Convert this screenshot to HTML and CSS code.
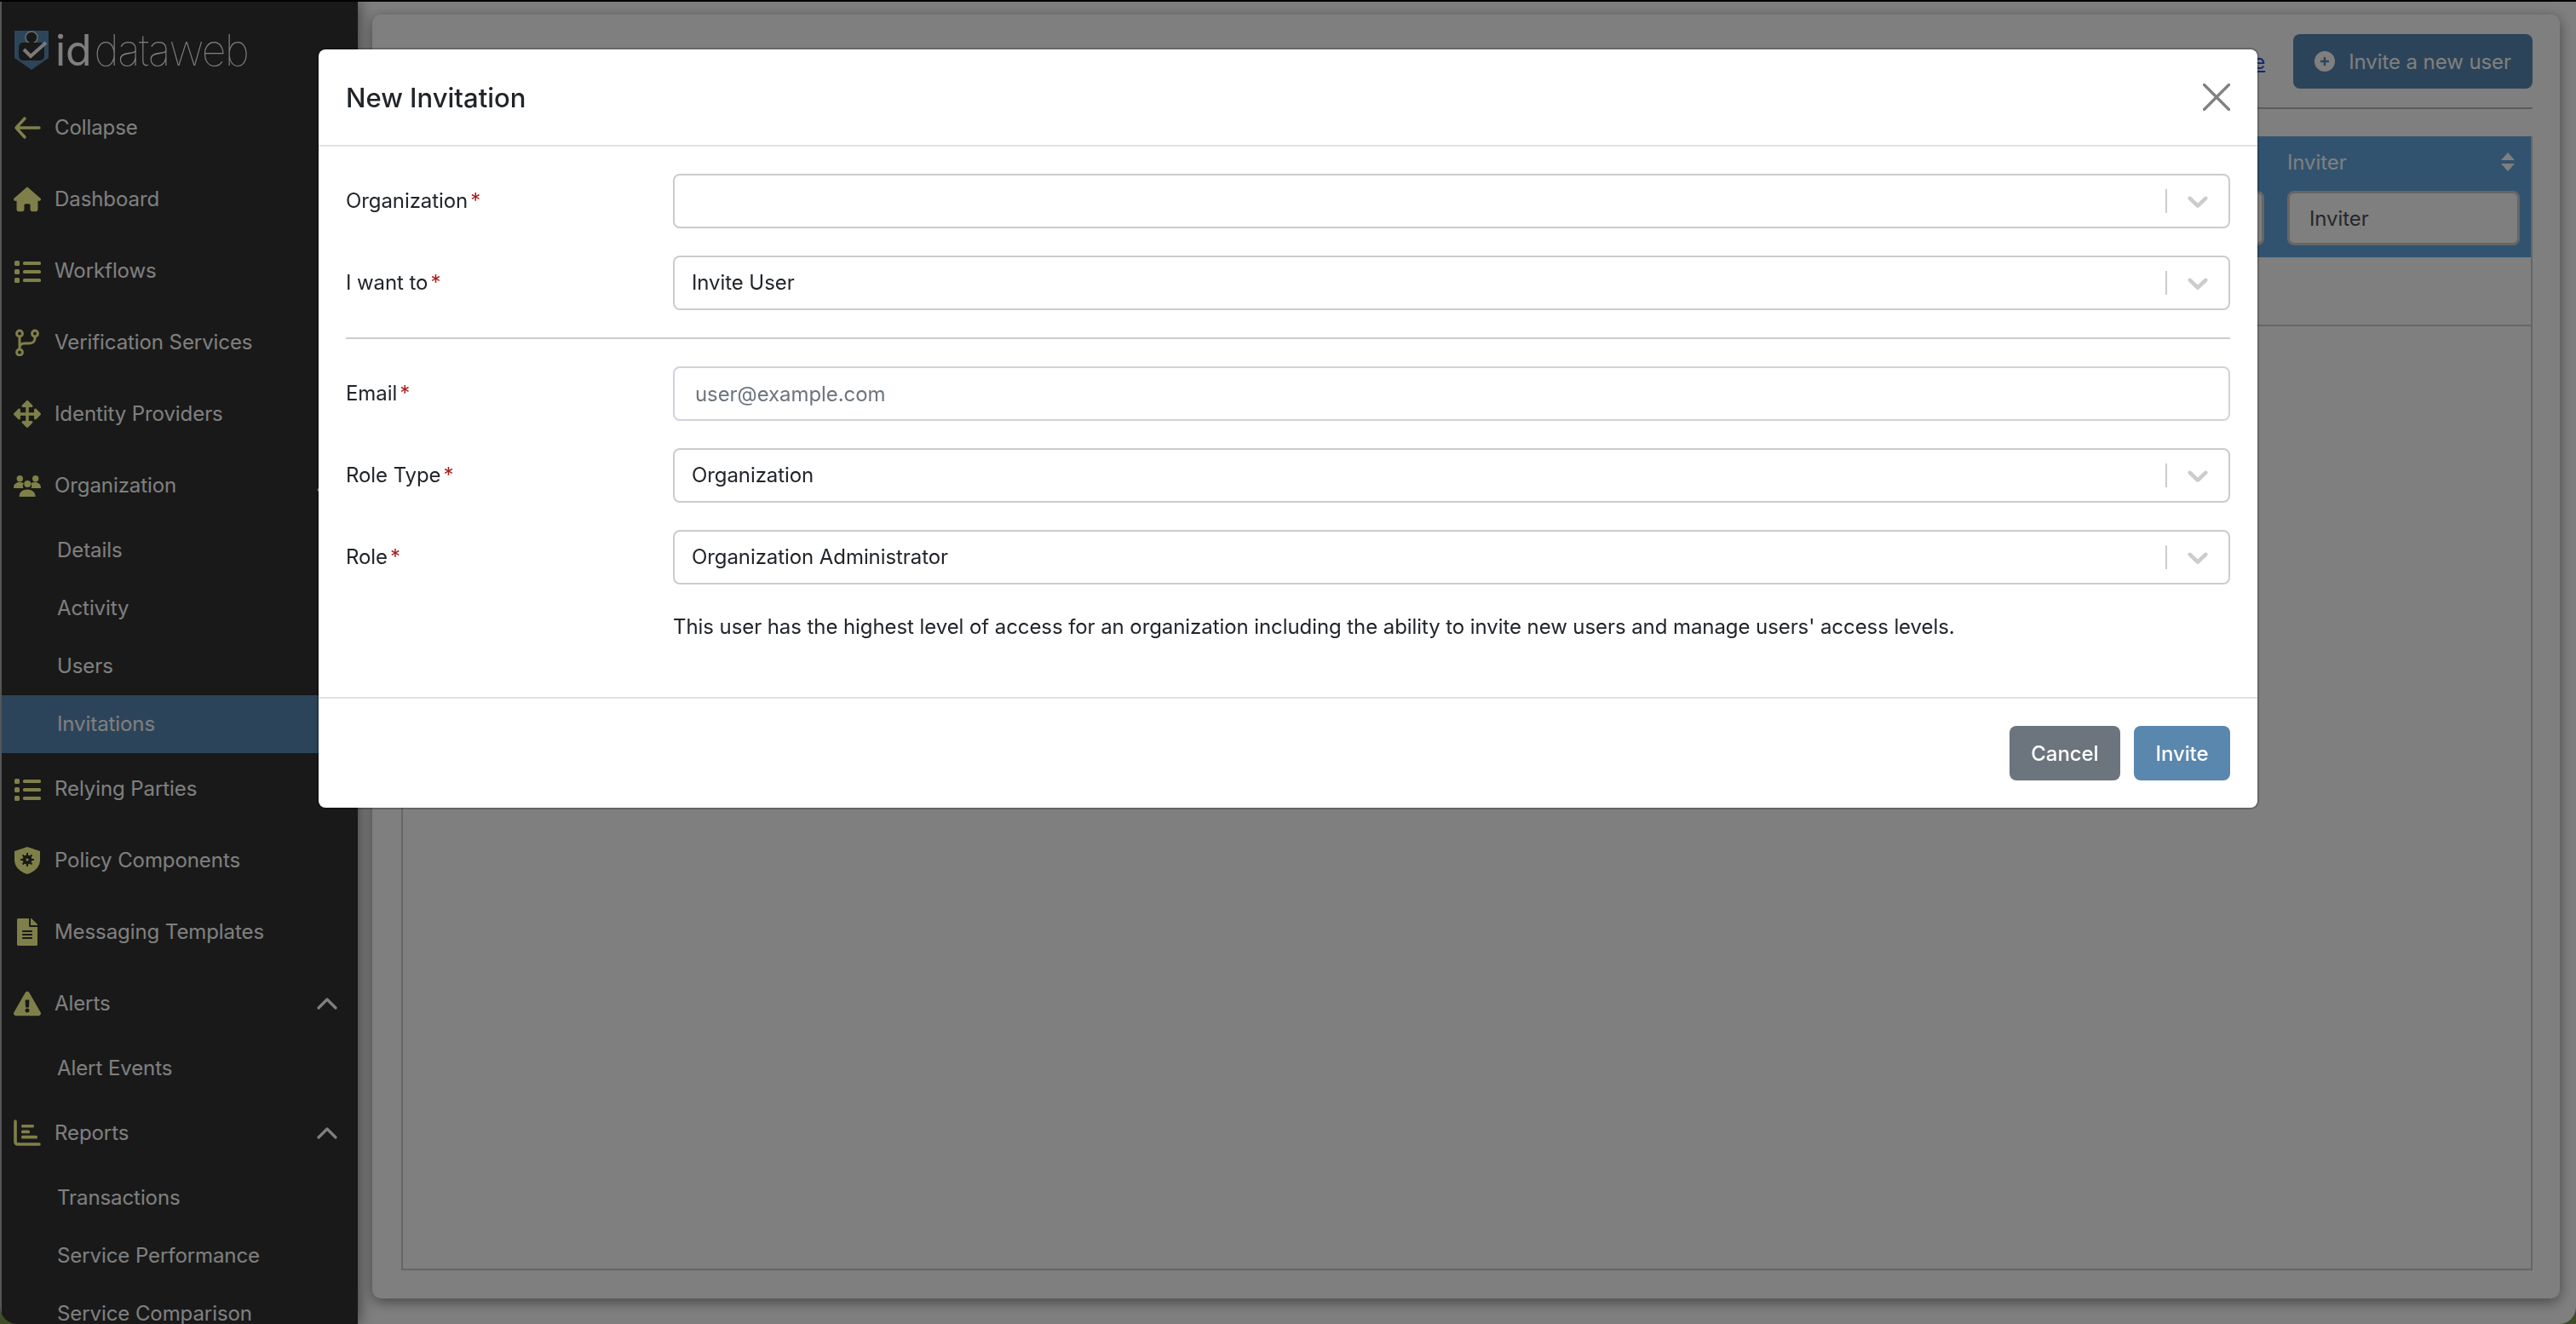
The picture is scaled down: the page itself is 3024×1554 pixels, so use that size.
FILE: index.html
```html
<!DOCTYPE html>
<html lang="en">
<head>
    <meta charset="UTF-8">
    <title>New Invitation</title>
    <link rel="stylesheet" href="styles.css">
</head>
<body>
    <div class="app">
        <!-- Left navigation -->
        <nav class="sidebar">
            <div class="logo">
                <svg class="logo-mark" width="42" height="48" viewBox="0 0 42 48">
                    <path d="M1 1H41V33L21 47L1 33Z" fill="#5a8ab4"/>
                    <circle cx="21" cy="9" r="7" fill="#333" stroke="#ddd" stroke-width="1.5"/>
                    <path d="M11 15H31A5 5 0 0 1 36 20V31A5 5 0 0 1 31 36H11A5 5 0 0 1 6 31V20A5 5 0 0 1 11 15Z" fill="#333"/>
                    <path d="M12 23L20 31L38 15" fill="none" stroke="#f4f4f4" stroke-width="4"/>
                </svg>
                <span class="logo-id">id</span><span class="logo-name">dataweb</span>
            </div>

            <a class="nav-item"><svg class="nav-icon" viewBox="0 0 32 32"><path d="M13 5L3 16L13 27M3 16H30" fill="none" stroke="currentColor" stroke-width="3.4" stroke-linecap="round" stroke-linejoin="round"/></svg>Collapse</a>
            <a class="nav-item"><svg class="nav-icon" viewBox="0 0 576 512"><path d="M575.8 255.5c0 18-15 32.1-32 32.1h-32l.7 160.2c0 2.7-.2 5.4-.5 8.1V472c0 22.1-17.9 40-40 40H456c-1.1 0-2.2 0-3.3-.1c-1.4 .1-2.8 .1-4.2 .1H416 392c-22.1 0-40-17.9-40-40V448 384c0-17.7-14.3-32-32-32H256c-17.7 0-32 14.3-32 32v64 24c0 22.1-17.9 40-40 40H160 128.1c-1.5 0-3-.1-4.5-.2c-1.2 .1-2.4 .2-3.6 .2H104c-22.1 0-40-17.9-40-40V360c0-.9 0-1.9 .1-2.8V287.6H32c-18 0-32-14-32-32.1c0-9 3-17 10-24L266.4 8c7-7 15-8 22-8s15 2 21 7L564.8 231.5c8 7 12 15 11 24z"/></svg>Dashboard</a>
            <a class="nav-item"><svg class="nav-icon" viewBox="0 0 32 32"><rect x="1" y="4" width="6" height="6" rx="1.5"/><rect x="1" y="14" width="6" height="6" rx="1.5"/><rect x="1" y="24" width="6" height="6" rx="1.5"/><rect x="11" y="5" width="21" height="4" rx="1.5"/><rect x="11" y="15" width="21" height="4" rx="1.5"/><rect x="11" y="25" width="21" height="4" rx="1.5"/></svg>Workflows</a>
            <a class="nav-item"><svg class="nav-icon" viewBox="0 0 32 32"><circle cx="7" cy="5.5" r="3.4" fill="none" stroke="currentColor" stroke-width="3"/><circle cx="25" cy="5.5" r="3.4" fill="none" stroke="currentColor" stroke-width="3"/><circle cx="7" cy="27.5" r="3.4" fill="none" stroke="currentColor" stroke-width="3"/><path d="M7 9V24M25 9V11C25 15 22 17 18 17H13C9 17 7 19 7 22" fill="none" stroke="currentColor" stroke-width="3"/></svg>Verification Services</a>
            <a class="nav-item"><svg class="nav-icon" viewBox="0 0 512 512"><path d="M352.201 425.775l-79.196 79.196c-9.373 9.373-24.568 9.373-33.941 0l-79.196-79.196c-15.119-15.119-4.411-40.971 16.971-40.97h51.162L228 284H127.196v51.162c0 21.382-25.851 32.09-40.971 16.971L7.029 272.937c-9.373-9.373-9.373-24.569 0-33.941L86.225 159.8c15.119-15.119 40.971-4.411 40.971 16.971V228H228V127.196h-51.23c-21.382 0-32.09-25.851-16.971-40.971l79.196-79.196c9.373-9.373 24.568-9.373 33.941 0l79.196 79.196c15.119 15.119 4.411 40.971-16.971 40.971h-51.162V228h100.804v-51.162c0-21.382 25.851-32.09 40.97-16.971l79.196 79.196c9.373 9.373 9.373 24.569 0 33.941L425.773 352.2c-15.119 15.119-40.971 4.411-40.97-16.971V284H284v100.804h51.23c21.382 0 32.09 25.851 16.971 40.971z"/></svg>Identity Providers</a>
            <a class="nav-item"><svg class="nav-icon" viewBox="0 0 32 32"><circle cx="7.3" cy="7.7" r="3.7"/><circle cx="16.3" cy="14" r="4"/><circle cx="25.7" cy="7.7" r="3.7"/><path d="M0 19C0 14 3 12 7 12C9 12 11 12.5 12 13.5C10.5 15 10.5 17 11.5 19Z"/><path d="M32 19C32 14 29 12 25 12C23 12 21 12.5 20 13.5C21.5 15 21.5 17 20.5 19Z"/><path d="M6.6 29C6.6 24 10 20.5 16 20.5C22 20.5 25.6 24 25.6 29Z"/></svg>Organization<svg class="nav-caret" viewBox="0 0 24 14"><path d="M2 12L12 2L22 12" fill="none" stroke="currentColor" stroke-width="3.2" stroke-linecap="round" stroke-linejoin="round"/></svg></a>
            <a class="nav-sub">Details</a>
            <a class="nav-sub">Activity</a>
            <a class="nav-sub">Users</a>
            <a class="nav-sub active">Invitations</a>
            <a class="nav-item"><svg class="nav-icon" viewBox="0 0 32 32"><rect x="1" y="4" width="6" height="6" rx="1.5"/><rect x="1" y="14" width="6" height="6" rx="1.5"/><rect x="1" y="24" width="6" height="6" rx="1.5"/><rect x="11" y="5" width="21" height="4" rx="1.5"/><rect x="11" y="15" width="21" height="4" rx="1.5"/><rect x="11" y="25" width="21" height="4" rx="1.5"/></svg>Relying Parties</a>
            <a class="nav-item"><svg class="nav-icon" viewBox="0 0 32 32"><path d="M16 0L31 5V15C31 24 24 29.5 16 32C8 29.5 1 24 1 15V5Z"/><circle cx="16" cy="15" r="5.5" fill="#333"/><path d="M16 7V23M8 15H24M10.5 9.5L21.5 20.5M21.5 9.5L10.5 20.5" stroke="#333" stroke-width="2"/><circle cx="16" cy="15" r="1.6"/></svg>Policy Components</a>
            <a class="nav-item"><svg class="nav-icon" viewBox="0 0 384 512"><path d="M224 136V0H24C10.7 0 0 10.7 0 24v464c0 13.3 10.7 24 24 24h336c13.3 0 24-10.7 24-24V160H248c-13.2 0-24-10.8-24-24zm64 236c0 6.6-5.4 12-12 12H108c-6.6 0-12-5.4-12-12v-8c0-6.6 5.4-12 12-12h168c6.6 0 12 5.4 12 12v8zm0-64c0 6.6-5.4 12-12 12H108c-6.6 0-12-5.4-12-12v-8c0-6.6 5.4-12 12-12h168c6.6 0 12 5.4 12 12v8zm0-72v8c0 6.6-5.4 12-12 12H108c-6.6 0-12-5.4-12-12v-8c0-6.6 5.4-12 12-12h168c6.6 0 12 5.4 12 12zm96-114.1v6.1H256V0h6.1c6.4 0 12.5 2.5 17 7l97.9 98c4.5 4.5 7 10.6 7 16.9z"/></svg>Messaging Templates</a>
            <a class="nav-item"><svg class="nav-icon" viewBox="0 0 576 512"><path d="M569.517 440.013C587.975 472.007 564.806 512 527.94 512H48.054c-36.937 0-59.999-40.055-41.577-71.987L246.423 23.985c18.467-32.009 64.72-31.951 83.154 0l239.94 416.028zM288 354c-25.405 0-46 20.595-46 46s20.595 46 46 46 46-20.595 46-46-20.595-46-46-46zm-43.673-165.346l7.418 136c.347 6.364 5.609 11.346 11.982 11.346h48.546c6.373 0 11.635-4.982 11.982-11.346l7.418-136c.375-6.874-5.098-12.654-11.982-12.654h-63.383c-6.884 0-12.356 5.78-11.981 12.654z"/></svg>Alerts<svg class="nav-caret" viewBox="0 0 24 14"><path d="M2 12L12 2L22 12" fill="none" stroke="currentColor" stroke-width="3.2" stroke-linecap="round" stroke-linejoin="round"/></svg></a>
            <a class="nav-sub">Alert Events</a>
            <a class="nav-item"><svg class="nav-icon" viewBox="0 0 32 32"><path d="M2 2V26C2 28 3 29 5 29H30" fill="none" stroke="currentColor" stroke-width="3.6" stroke-linecap="round"/><rect x="9" y="6" width="15" height="3.6" rx="1.5"/><rect x="9" y="12.6" width="10" height="3.6" rx="1.5"/><rect x="9" y="18.8" width="19" height="3.6" rx="1.5"/></svg>Reports<svg class="nav-caret" viewBox="0 0 24 14"><path d="M2 12L12 2L22 12" fill="none" stroke="currentColor" stroke-width="3.2" stroke-linecap="round" stroke-linejoin="round"/></svg></a>
            <a class="nav-sub">Transactions</a>
            <a class="nav-sub">Service Performance</a>
            <a class="nav-sub">Service Comparison</a>
        </nav>

        <!-- Page behind the dialog -->
        <main class="main">
            <div class="card">
                <div class="card-header">
                    <a class="help-link">e</a>
                    <button class="invite-btn">
                        <svg width="24" height="24" viewBox="0 0 24 24"><circle cx="12" cy="12" r="12" fill="#fff"/><path d="M12 7V17M7 12H17" stroke="#5888b2" stroke-width="2.4"/></svg>
                        Invite a new user
                    </button>
                </div>
                <div class="table-box">
                    <div class="table-head">
                        <div class="col"><input class="filter" type="text"></div>
                        <div class="col">
                            <div class="col-title">Inviter
                                <svg width="16" height="22" viewBox="0 0 16 22"><path d="M8 0L16 9H0ZM8 22L0 13H16Z" fill="#fff"/></svg>
                            </div>
                            <input class="filter" type="text" placeholder="Inviter">
                        </div>
                    </div>
                    <div class="table-row"></div>
                </div>
            </div>
        </main>
    </div>

    <div class="backdrop"></div>

    <div class="modal-wrap">
        <div class="modal">
            <div class="modal-header">
                <h5 class="modal-title">New Invitation</h5>
                <svg class="modal-close" width="32" height="32" viewBox="0 0 32 32"><path d="M1.5 1.5L30.5 30.5M30.5 1.5L1.5 30.5" stroke="#808080" stroke-width="3.2" stroke-linecap="round"/></svg>
            </div>
            <div class="modal-body">
                <div class="form-row">
                    <label class="form-label">Organization<span class="req">*</span></label>
                    <div class="select"><span class="select-value"></span><span class="select-sep"></span><svg class="select-arrow" width="40" height="40" viewBox="0 0 20 20"><path d="M4.516 7.548c0.436-0.446 1.043-0.481 1.576 0l3.908 3.747 3.908-3.747c0.533-0.481 1.141-0.446 1.574 0 0.436 0.445 0.408 1.197 0 1.615-0.406 0.418-4.695 4.502-4.695 4.502-0.217 0.223-0.502 0.335-0.787 0.335s-0.57-0.112-0.789-0.335c0 0-4.287-4.084-4.695-4.502s-0.436-1.17 0-1.615z"/></svg></div>
                </div>
                <div class="form-row">
                    <label class="form-label">I want to<span class="req">*</span></label>
                    <div class="select"><span class="select-value">Invite User</span><span class="select-sep"></span><svg class="select-arrow" width="40" height="40" viewBox="0 0 20 20"><path d="M4.516 7.548c0.436-0.446 1.043-0.481 1.576 0l3.908 3.747 3.908-3.747c0.533-0.481 1.141-0.446 1.574 0 0.436 0.445 0.408 1.197 0 1.615-0.406 0.418-4.695 4.502-4.695 4.502-0.217 0.223-0.502 0.335-0.787 0.335s-0.57-0.112-0.789-0.335c0 0-4.287-4.084-4.695-4.502s-0.436-1.17 0-1.615z"/></svg></div>
                </div>
                <hr class="divider">
                <div class="form-row">
                    <label class="form-label">Email<span class="req">*</span></label>
                    <input class="text-input" type="text" placeholder="user@example.com">
                </div>
                <div class="form-row">
                    <label class="form-label">Role Type<span class="req">*</span></label>
                    <div class="select"><span class="select-value">Organization</span><span class="select-sep"></span><svg class="select-arrow" width="40" height="40" viewBox="0 0 20 20"><path d="M4.516 7.548c0.436-0.446 1.043-0.481 1.576 0l3.908 3.747 3.908-3.747c0.533-0.481 1.141-0.446 1.574 0 0.436 0.445 0.408 1.197 0 1.615-0.406 0.418-4.695 4.502-4.695 4.502-0.217 0.223-0.502 0.335-0.787 0.335s-0.57-0.112-0.789-0.335c0 0-4.287-4.084-4.695-4.502s-0.436-1.17 0-1.615z"/></svg></div>
                </div>
                <div class="form-row">
                    <label class="form-label">Role<span class="req">*</span></label>
                    <div class="select"><span class="select-value">Organization Administrator</span><span class="select-sep"></span><svg class="select-arrow" width="40" height="40" viewBox="0 0 20 20"><path d="M4.516 7.548c0.436-0.446 1.043-0.481 1.576 0l3.908 3.747 3.908-3.747c0.533-0.481 1.141-0.446 1.574 0 0.436 0.445 0.408 1.197 0 1.615-0.406 0.418-4.695 4.502-4.695 4.502-0.217 0.223-0.502 0.335-0.787 0.335s-0.57-0.112-0.789-0.335c0 0-4.287-4.084-4.695-4.502s-0.436-1.17 0-1.615z"/></svg></div>
                </div>
                <p class="role-help">This user has the highest level of access for an organization including the ability to invite new users and manage users' access levels.</p>
            </div>
            <div class="modal-footer">
                <button class="btn btn-cancel">Cancel</button>
                <button class="btn btn-invite">Invite</button>
            </div>
        </div>
    </div>
</body>
</html>
```

FILE: styles.css
```css
* {
    box-sizing: border-box;
}

body {
    margin: 0;
    height: 100vh;
    overflow: hidden;
    background: #7a9a50; /* desktop showing through the window corners */
    font-family: "Inter", "Liberation Sans", sans-serif;
    font-size: 24px;
    letter-spacing: -0.08px;
    color: #212529;
}

.app {
    display: flex;
    height: 100vh;
    overflow: hidden;
    background: #fff;
    border-top: 2px solid #000;
    border-radius: 0 0 20px 20px;
}

/* Sidebar */
.sidebar {
    flex: 0 0 420px;
    height: 100%;
    overflow: hidden;
    background: #323232;
    border-left: 2px solid #aaa;
    box-shadow: 0 0 18px rgba(0, 0, 0, 0.6);
    color: #fff;
    z-index: 1;
}

.logo {
    display: flex;
    align-items: center;
    height: 106px;
    padding: 8px 0 0 14px;
}

.logo-mark {
    margin-right: 7px;
}

.logo-id {
    font-size: 50px;
    font-weight: 400;
}

.logo-name {
    font-size: 50px;
    font-weight: 100;
    margin-left: 3px;
    letter-spacing: -1.5px;
}

.nav-item {
    display: flex;
    align-items: center;
    height: 84px;
    padding-left: 14px;
    padding-bottom: 1px;
}

.nav-icon {
    flex: 0 0 32px;
    width: 32px;
    height: 32px;
    margin-right: 16px;
    fill: #ffff92;
    color: #ffff92;
}

.nav-caret {
    width: 24px;
    height: 14px;
    margin-left: auto;
    margin-right: 24px;
}

.nav-sub {
    display: flex;
    align-items: center;
    height: 68px;
    padding-left: 65px;
    padding-bottom: 1px;
}

.nav-sub.active {
    background: #5888b2;
}

/* Page behind the modal */
.main {
    flex: 1;
    min-width: 0;
    padding: 15px 19px 30px 17px;
}

.card {
    display: flex;
    flex-direction: column;
    height: 100%;
    padding: 23px 32px 33px 34px;
    background: #fff;
    border-radius: 10px;
    box-shadow: 0 4px 16px rgba(0, 0, 0, 0.45);
}

.card-header {
    display: flex;
    justify-content: flex-end;
    align-items: center;
    gap: 33px;
    padding-bottom: 22px;
    border-bottom: 2px solid #bbb;
}

.help-link {
    color: #2b50d8;
    text-decoration: underline;
}

.invite-btn {
    display: flex;
    align-items: center;
    gap: 16px;
    height: 64px;
    padding: 0 25px;
    background: #5888b2;
    color: #fff;
    border: none;
    border-radius: 8px;
    font: inherit;
    letter-spacing: inherit;
}

.table-box {
    flex: 1;
    margin-top: 32px;
    border: 2px solid #ccc;
    border-top: none;
}

.table-head {
    display: grid;
    grid-template-columns: 1fr 273px;
    gap: 27px;
    height: 142px;
    padding: 0 13px 14px 0;
    align-items: end;
    background: #62a6de;
}

.col-title {
    display: flex;
    justify-content: space-between;
    align-items: center;
    height: 60px;
    margin-bottom: 4px;
    padding-right: 6px;
    color: #fff;
}

.filter {
    display: block;
    width: 100%;
    height: 64px;
    padding: 0 23px;
    border: 3px solid #ccc;
    border-radius: 8px;
    font: inherit;
    letter-spacing: inherit;
    background: #fff;
}

.filter::placeholder {
    color: #495057;
}

.table-row {
    height: 81px;
    border-bottom: 2px solid #ccc;
}

/* Modal */
.backdrop {
    position: fixed;
    inset: 0;
    background: rgba(0, 0, 0, 0.5);
    z-index: 10;
}

.modal-wrap {
    position: fixed;
    inset: 0;
    display: flex;
    justify-content: center;
    align-items: flex-start;
    padding-top: 56px;
    z-index: 11;
}

.modal {
    width: 2280px;
    background: #fff;
    background-clip: padding-box;
    border: 2px solid rgba(0, 0, 0, 0.2);
    border-radius: 10px;
}

.modal-header {
    display: flex;
    justify-content: space-between;
    align-items: center;
    height: 114px;
    padding: 0 32px;
    border-bottom: 2px solid #dee2e6;
}

.modal-title {
    margin: 0;
    font-size: 31px;
    font-weight: 500;
    letter-spacing: 0;
    color: #212529;
}

.modal-body {
    padding: 32px;
}

.form-row {
    display: grid;
    grid-template-columns: 384px 1fr;
    align-items: center;
    margin-bottom: 32px;
}

.form-label {
    padding-bottom: 2px;
    color: #212529;
}

.req {
    margin-left: 3px;
    color: #a81c1c;
}

.select {
    display: flex;
    align-items: center;
    height: 64px;
    padding-left: 20px;
    border: 2px solid #ccc;
    border-radius: 8px;
}

.select-value {
    flex: 1;
    padding-bottom: 2px;
    color: #212529;
}

.select-sep {
    width: 2px;
    height: 28px;
    background: #ccc;
}

.select-arrow {
    margin: 0 16px;
    fill: #ccc;
}

.divider {
    height: 2px;
    margin: 0 0 32px;
    border: none;
    background: #ccc;
}

.text-input {
    width: 100%;
    height: 64px;
    padding: 0 24px;
    border: 2px solid #ced4da;
    border-radius: 8px;
    font: inherit;
    letter-spacing: inherit;
}

.text-input::placeholder {
    color: #6c757d;
}

.role-help {
    height: 36px;
    margin: 0 0 32px 384px;
    line-height: 36px;
}

.modal-footer {
    display: flex;
    justify-content: flex-end;
    gap: 16px;
    padding: 32px;
    border-top: 2px solid #dee2e6;
}

.btn {
    height: 64px;
    padding: 0 25.5px;
    border: none;
    border-radius: 8px;
    color: #fff;
    font: inherit;
    font-weight: 500;
    letter-spacing: inherit;
}

.btn-cancel {
    background: #6c757d;
}

.btn-invite {
    background: #5a87ae;
}
```
